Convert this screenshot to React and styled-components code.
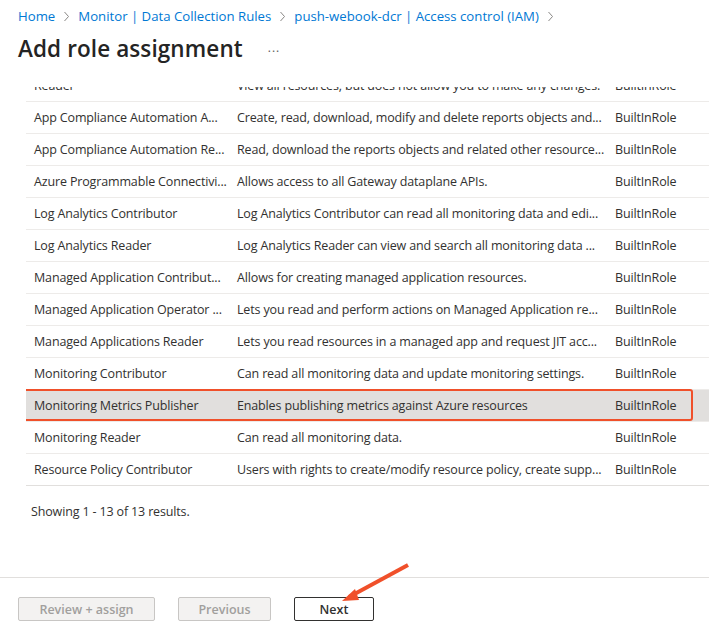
import React from "react";
import styled, { createGlobalStyle } from "styled-components";

const GlobalStyle = createGlobalStyle`
  html, body, #root {
    height: 100%;
  }
  body {
    margin: 0;
    background: #fff;
    font-family: "Open Sans", "Noto Sans", sans-serif;
    color: #323130;
    overflow: hidden;
  }
`;

const Page = styled.div`
  display: flex;
  flex-direction: column;
  height: 100%;
  position: relative;
`;

const Header = styled.div`
  padding: 6px 18px 0;
`;

const Breadcrumb = styled.nav`
  display: flex;
  align-items: center;
  gap: 8px;
  height: 20px;
  font-size: 13.2px;
`;

const Crumb = styled.a`
  color: #0078d4;
  text-decoration: none;
  white-space: nowrap;
`;

const Chevron = styled.span`
  display: inline-flex;
  color: #8a8886;
`;

const TitleRow = styled.div`
  display: flex;
  align-items: center;
  gap: 25px;
  margin-top: 7px;
  height: 30px;
`;

const Title = styled.h1`
  margin: 0;
  font-size: 22.5px;
  font-weight: 600;
  color: #242424;
  letter-spacing: 0.1px;
`;

const More = styled.span`
  color: #605e5c;
  font-size: 12px;
  letter-spacing: 1px;
  margin-top: -2px;
`;

const Body = styled.div`
  flex: 1;
  padding-top: 24px;
`;

const Viewport = styled.div`
  margin-left: 26px;
  height: 400px;
  overflow: hidden;
`;

const Grid = styled.div`
  margin-top: -17px;
`;

const Row = styled.div`
  position: relative;
  display: grid;
  grid-template-columns: 203px 378px 1fr;
  height: 31px;
  align-items: center;
  border-bottom: 1px solid ${(p) => (p.$last ? "#e1dfdd" : "#edebe9")};
  background: ${(p) => (p.$selected ? "#e1dfdd" : "transparent")};
  font-size: 12.5px;
  letter-spacing: -0.15px;
`;

const Cell = styled.div`
  padding-left: 8px;
  padding-right: 1px;
  white-space: nowrap;
  overflow: hidden;
  text-overflow: ellipsis;
`;

const Highlight = styled.div`
  position: absolute;
  left: -3px;
  top: -1px;
  width: 670px;
  height: 32px;
  border: 2px solid #f0502a;
  border-radius: 3px;
  box-sizing: border-box;
  pointer-events: none;
`;

const Count = styled.div`
  padding: 16px 0 0 31px;
  font-size: 12.5px;
  letter-spacing: -0.15px;
`;

const Footer = styled.div`
  border-top: 1px solid #e1dfdd;
  height: 59px;
  display: flex;
  align-items: flex-start;
  gap: 23px;
  padding: 19px 18px 0;
  box-sizing: border-box;
`;

const Button = styled.button`
  height: 24px;
  padding: 0;
  border-radius: 2px;
  font-family: inherit;
  font-size: 12.5px;
  font-weight: 600;
  border: 1px solid ${(p) => (p.$disabled ? "#c8c6c4" : "#323130")};
  background: ${(p) => (p.$disabled ? "#f3f2f1" : "#fff")};
  color: ${(p) => (p.$disabled ? "#a19f9d" : "#323130")};
  width: ${(p) => p.$w}px;
`;

const Arrow = styled.svg`
  position: absolute;
  left: 335px;
  top: 559px;
  pointer-events: none;
`;

const rows = [
  ["Reader", "View all resources, but does not allow you to make any changes.", "BuiltInRole"],
  ["App Compliance Automation A...", "Create, read, download, modify and delete reports objects and...", "BuiltInRole"],
  ["App Compliance Automation Re...", "Read, download the reports objects and related other resource...", "BuiltInRole"],
  ["Azure Programmable Connectivi...", "Allows access to all Gateway dataplane APIs.", "BuiltInRole"],
  ["Log Analytics Contributor", "Log Analytics Contributor can read all monitoring data and edi...", "BuiltInRole"],
  ["Log Analytics Reader", "Log Analytics Reader can view and search all monitoring data ...", "BuiltInRole"],
  ["Managed Application Contribut...", "Allows for creating managed application resources.", "BuiltInRole"],
  ["Managed Application Operator ...", "Lets you read and perform actions on Managed Application re...", "BuiltInRole"],
  ["Managed Applications Reader", "Lets you read resources in a managed app and request JIT acc...", "BuiltInRole"],
  ["Monitoring Contributor", "Can read all monitoring data and update monitoring settings.", "BuiltInRole"],
  ["Monitoring Metrics Publisher", "Enables publishing metrics against Azure resources", "BuiltInRole"],
  ["Monitoring Reader", "Can read all monitoring data.", "BuiltInRole"],
  ["Resource Policy Contributor", "Users with rights to create/modify resource policy, create supp...", "BuiltInRole"],
];

const ChevronIcon = () => (
  <Chevron>
    <svg width="7" height="11" viewBox="0 0 7 11">
      <path d="M1.5 1 L5.5 5.5 L1.5 10" fill="none" stroke="currentColor" strokeWidth="1" />
    </svg>
  </Chevron>
);

export default function App() {
  return (
    <Page>
      <GlobalStyle />
      <Header>
        <Breadcrumb>
          <Crumb>Home</Crumb>
          <ChevronIcon />
          <Crumb>Monitor | Data Collection Rules</Crumb>
          <ChevronIcon />
          <Crumb>push-webook-dcr | Access control (IAM)</Crumb>
          <ChevronIcon />
        </Breadcrumb>
        <TitleRow>
          <Title>Add role assignment</Title>
          <More>...</More>
        </TitleRow>
      </Header>
      <Body>
        <Viewport>
          <Grid>
            {rows.map((r, i) => (
              <Row key={r[0]} $selected={i === 10} $last={i === rows.length - 1}>
                <Cell>{r[0]}</Cell>
                <Cell>{r[1]}</Cell>
                <Cell>{r[2]}</Cell>
                {i === 10 && <Highlight />}
              </Row>
            ))}
          </Grid>
        </Viewport>
        <Count>Showing 1 - 13 of 13 results.</Count>
      </Body>
      <Footer>
        <Button $disabled $w={137}>Review + assign</Button>
        <Button $disabled $w={93}>Previous</Button>
        <Button $w={80}>Next</Button>
      </Footer>
      <Arrow width="80" height="50" viewBox="0 0 80 50">
        <line x1="73" y1="6" x2="14" y2="38" stroke="#f0502a" strokeWidth="4" strokeLinecap="butt" />
        <polygon points="7,42 20,30 24,41" fill="#f0502a" />
      </Arrow>
    </Page>
  );
}
